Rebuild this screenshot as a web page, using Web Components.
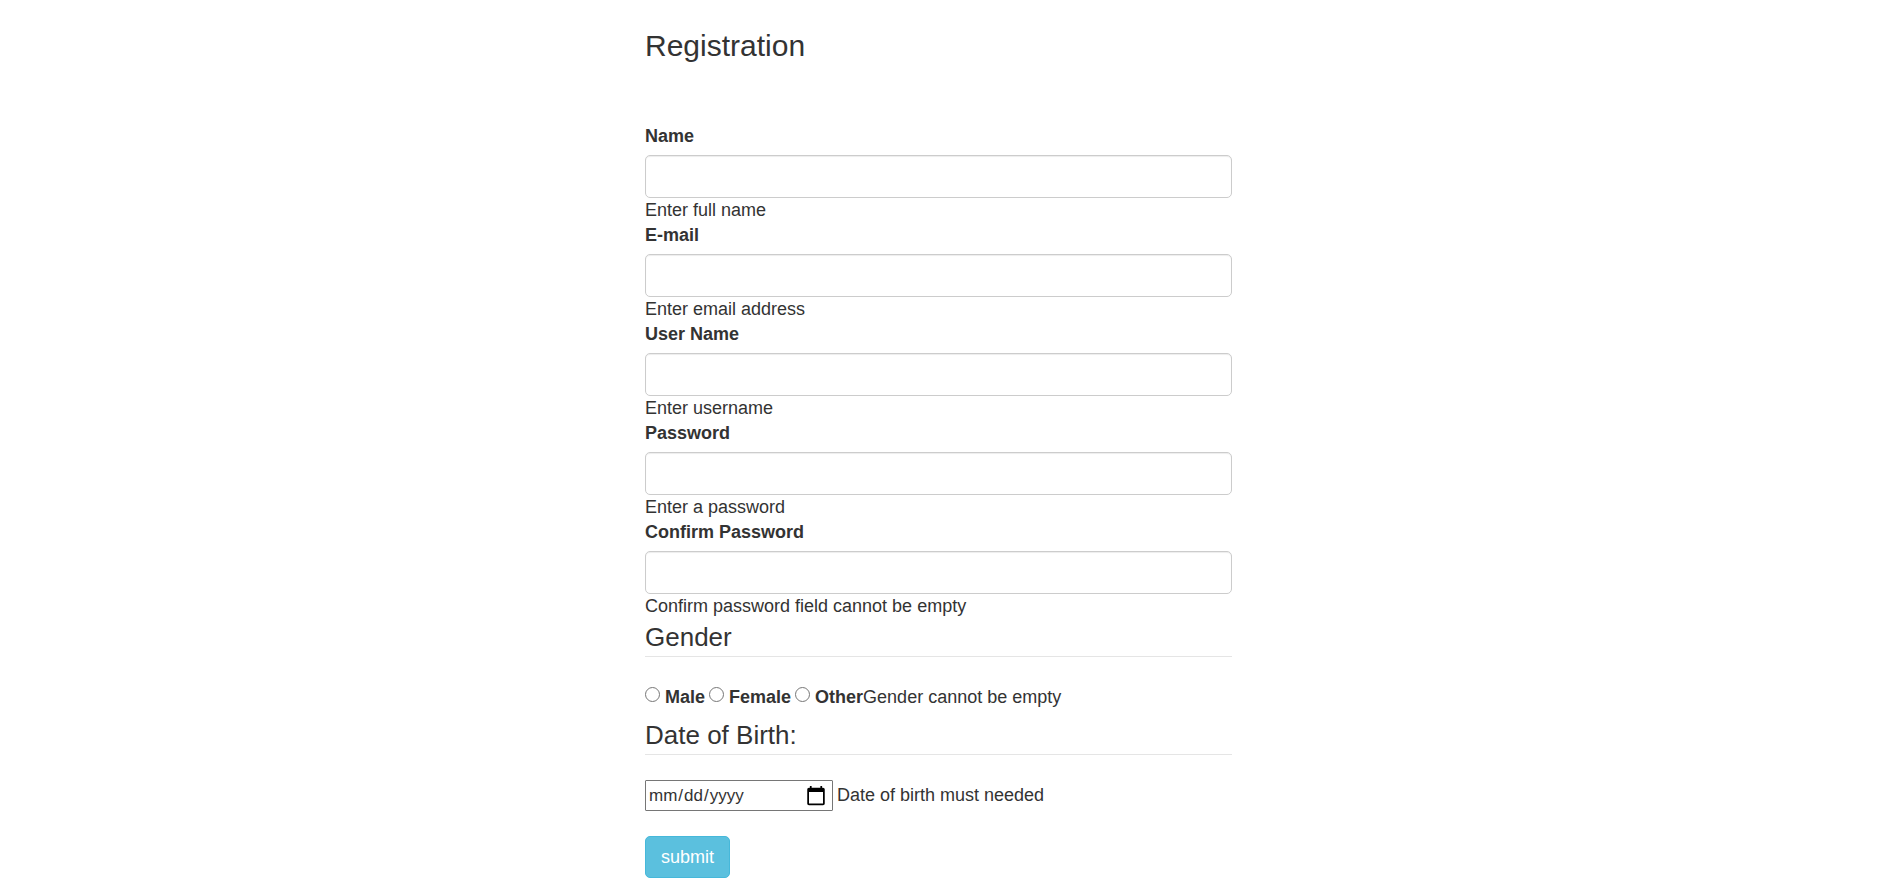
<!DOCTYPE html>
<html lang="en">
<head>
<meta charset="utf-8">
<title>Registration</title>
<style>
  body {
    margin: 0;
    background: #fff;
    color: #333;
    font: 18px/25px "Liberation Sans", Arial, sans-serif;
  }
</style>
</head>
<body>
<registration-form>
  <text-field label="Name" type="text">Enter full name</text-field>
  <text-field label="E-mail" type="email">Enter email address</text-field>
  <text-field label="User Name" type="text">Enter username</text-field>
  <text-field label="Password" type="password">Enter a password</text-field>
  <text-field label="Confirm Password" type="password">Confirm password field cannot be empty</text-field>
  <gender-field>Gender cannot be empty</gender-field>
  <birth-field>Date of birth must needed</birth-field>
</registration-form>

<script>
const groupStyles = `
  :host { display: block; }
  fieldset { min-width: 0; margin: 0; padding: 0; border: 0; }
  legend {
    box-sizing: border-box;
    width: 100%;
    height: 38px;
    padding: 0;
    border-bottom: 1px solid #e5e5e5;
    font-size: 26px;
    line-height: 36px;
  }
`;

class RegistrationForm extends HTMLElement {
  constructor() {
    super();
    this.attachShadow({ mode: "open" }).innerHTML = `
      <style>
        :host { display: block; max-width: 587px; margin: 0 auto; }
        h2 { margin: 0; padding: 29px 0 62px; font-size: 30px; font-weight: 400; line-height: 33px; }
        form { margin: 0; }
        button {
          display: block;
          box-sizing: border-box;
          height: 42px;
          margin: 25px 0 0;
          padding: 0 15px;
          border: 1px solid #46b8da;
          border-radius: 5px;
          background: #5bc0de;
          color: #fff;
          font: inherit;
          cursor: pointer;
        }
      </style>
      <h2>Registration</h2>
      <form>
        <slot></slot>
        <button type="submit">submit</button>
      </form>`;
    this.shadowRoot.querySelector("form").addEventListener("submit", e => e.preventDefault());
  }
}

class TextField extends HTMLElement {
  constructor() {
    super();
    this.attachShadow({ mode: "open" }).innerHTML = `
      <style>
        :host { display: block; }
        label { display: block; margin-bottom: 6px; font-weight: 700; }
        input {
          display: block;
          box-sizing: border-box;
          width: 100%;
          height: 43px;
          margin: 0;
          padding: 8px 15px;
          border: 1px solid #ccc;
          border-radius: 5px;
          background: #fff;
          color: #555;
          font: inherit;
          box-shadow: inset 0 1px 1px rgba(0, 0, 0, .075);
        }
        p { margin: 0; }
      </style>
      <label for="control"></label>
      <input id="control">
      <p><slot></slot></p>`;
  }
  connectedCallback() {
    this.shadowRoot.querySelector("label").textContent = this.getAttribute("label");
    this.shadowRoot.querySelector("input").type = this.getAttribute("type");
  }
}

class GenderField extends HTMLElement {
  constructor() {
    super();
    this.attachShadow({ mode: "open" }).innerHTML = `
      <style>
        ${groupStyles}
        .choices { display: flex; flex-wrap: wrap; padding: 28px 0 7px; }
        .options { display: flex; gap: 4px; }
        label { display: flex; gap: 5px; font-weight: 700; }
        input { width: 15px; height: 15px; margin: 2px 0 0; }
      </style>
      <fieldset>
        <legend>Gender</legend>
        <div class="choices">
          <div class="options">
            <label><input type="radio" name="gender" value="male">Male</label>
            <label><input type="radio" name="gender" value="female">Female</label>
            <label><input type="radio" name="gender" value="other">Other</label>
          </div>
          <slot></slot>
        </div>
      </fieldset>`;
  }
}

class BirthField extends HTMLElement {
  constructor() {
    super();
    this.attachShadow({ mode: "open" }).innerHTML = `
      <style>
        ${groupStyles}
        .row { display: flex; flex-wrap: wrap; align-items: center; gap: 4px; padding-top: 25px; }
        input {
          box-sizing: border-box;
          width: 188px;
          height: 31px;
          margin: 0;
          padding: 0 2px;
          border: 1px solid #767676;
          border-radius: 1px;
          background: #fff;
          color: inherit;
          font: inherit;
          font-size: 17px;
        }
        input::-webkit-calendar-picker-indicator {
          box-sizing: border-box;
          width: 22px;
          height: 22px;
          margin-right: 3px;
          padding: 0;
        }
      </style>
      <fieldset>
        <legend>Date of Birth:</legend>
        <div class="row">
          <input type="date" id="birth" aria-label="Date of Birth">
          <label for="birth"><slot></slot></label>
        </div>
      </fieldset>`;
  }
}

customElements.define("text-field", TextField);
customElements.define("gender-field", GenderField);
customElements.define("birth-field", BirthField);
customElements.define("registration-form", RegistrationForm);
</script>
</body>
</html>
